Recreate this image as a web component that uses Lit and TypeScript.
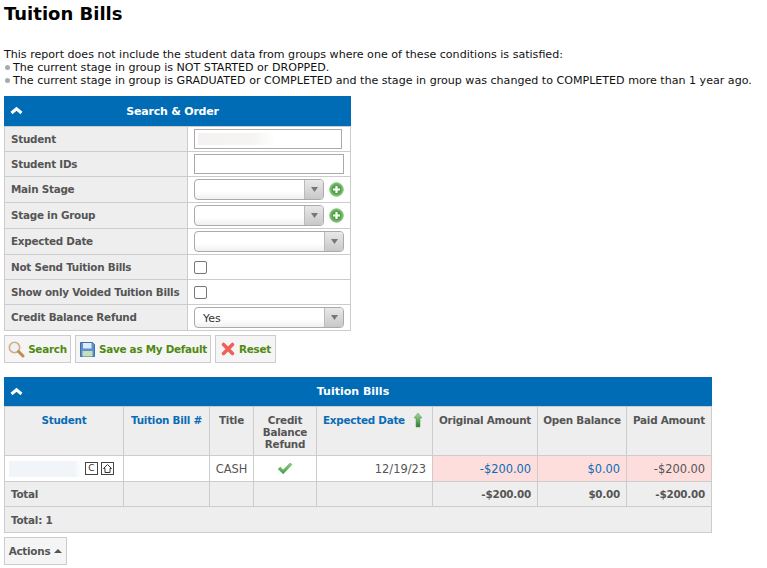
import { LitElement, html, css } from "lit";
import { customElement } from "lit/decorators.js";

const chevron = html`<svg class="chev" width="13" height="9" viewBox="0 0 13 9"><path d="M1.500 7 6.500 2.800l5 4.200" fill="none" stroke="#fff" stroke-width="3" stroke-linejoin="miter"/></svg>`;
const plus = html`<svg class="plus" width="15" height="15" viewBox="0 0 15 15"><circle cx="7.500" cy="7.500" r="6.800" fill="#6fb864" stroke="#8cc583"/><circle cx="7.500" cy="7.500" r="4.800" fill="#4f9f45"/><path d="M7.500 4v7M4 7.500h7" stroke="#fff" stroke-width="2.200"/></svg>`;
const arrowBox = html`<span class="arrow-box"><svg width="7" height="5" viewBox="0 0 7 5"><path d="M0 0h7L3.500 5z" fill="#777"/></svg></span>`;

@customElement("app-root")
export class AppRoot extends LitElement {
  static styles = css`
    :host { display: block; font: 12px "DejaVu Sans", Verdana, sans-serif; color: #111; width: 767px; height: 568px; overflow: hidden; box-sizing: border-box; padding: 0 4px; }
    h1 { margin: 0; padding-top: 3px; height: 48px; box-sizing: border-box; font-size: 18px; line-height: 21px; font-weight: bold; color: #000; }
    .note { font-size: 11.08px; line-height: 13px; color: #111; height: 48px; white-space: nowrap; }
    .dot { display: inline-block; width: 5px; height: 5px; border-radius: 50%; background: #aaa; margin: 0 3px 1px 1px; }
    .bar { background: #006cb5; color: #fff; font-weight: bold; font-size: 11px; text-align: center; display: flex; align-items: center; justify-content: center; position: relative; box-sizing: border-box; padding-right: 10px; }
    .chev { position: absolute; left: 6px; top: 50%; margin-top: -5px; }
    .search { width: 347px; }
    .search .bar { height: 30px; letter-spacing: -.2px; }
    table { border-collapse: collapse; table-layout: fixed; }
    .search table { width: 346px; }
    th, td { border: 1px solid #ccc; box-sizing: border-box; padding: 0; }
    .search th { background: #eee; color: #555; font-size: 10.4px; letter-spacing: -.25px; font-weight: bold; text-align: left; padding-left: 6px; white-space: nowrap; overflow: hidden; }
    .search tr.tall th { padding-bottom: 2px; }
    .search td { padding-left: 6px; white-space: nowrap; }
    .ctl { display: flex; align-items: center; gap: 5px; }
    .input { box-sizing: border-box; height: 20px; border: 1px solid #aaa; background: #fff; position: relative; }
    .blur1 { position: absolute; left: 3px; top: 3px; width: 78px; height: 12px; background: linear-gradient(90deg,#f3f2f0,#f5f4f2 70%,#fff); }
    .select { box-sizing: border-box; height: 21px; border: 1px solid #aaa; border-radius: 4px; background: linear-gradient(#fff 60%, #f0f0f0); display: flex; align-items: center; overflow: hidden; font-size: 11px; color: #333; }
    .select .val { flex: 1; padding-left: 8px; padding-top: 2px; }
    .arrow-box { width: 19px; height: 100%; border-left: 1px solid #bbb; background: linear-gradient(#e8e8e8,#c8c8c8); display: flex; align-items: center; justify-content: center; box-sizing: border-box; }
    .check { display: block; box-sizing: border-box; width: 13px; height: 13px; border: 1px solid #777; border-radius: 2px; background: #fff; }
    .buttons { display: flex; gap: 4px; margin-top: 4px; height: 28px; margin-bottom: 14px; }
    .btn { box-sizing: border-box; height: 28px; border: 1px solid #ccc; background: #f5f5f5; display: flex; align-items: center; color: #4f8a10; font-size: 10.4px; letter-spacing: -.25px; font-weight: bold; white-space: nowrap; justify-content: center; gap: 3px; }
    .bills { width: 708px; }
    .bills .bar { height: 29px; }
    .bills table { width: 707px; }
    .bills th { background: #eee; color: #555; font-size: 10.4px; letter-spacing: -.25px; font-weight: bold; vertical-align: top; padding: 7px 0 0; line-height: 12px; text-align: center; white-space: nowrap; }
    .bills th.link { color: #0a6cb5; }
    .bills th.exp { text-align: left; padding-left: 6px; }
    .bills td { font-size: 11.4px; color: #555; text-align: right; padding: 0 6px; }
    .bills td.c { text-align: center; padding: 0; }
    .bills td.pink { background: #fedddd; }
    .bills td.link { color: #0a6cb5; }
    .bills .tot td { background: #eee; font-weight: bold; font-size: 10.4px; letter-spacing: -.25px; }
    .bills .tot td.l { text-align: left; }
    .stu { display: flex; align-items: center; gap: 3px; padding-left: 4px; }
    .blur2 { width: 73px; height: 16px; background: linear-gradient(90deg,#f1f5fa,#f1f5fa 90%,#fff); }
    .ibox { box-sizing: border-box; width: 13px; height: 13px; border: 1px solid #444; display: flex; align-items: center; justify-content: center; font-size: 9px; color: #333; line-height: 1; font-weight: normal; }
    .sort { display: inline-block; vertical-align: top; margin: -2px 0 -4px 8px; }
    .actions { box-sizing: border-box; margin-top: 4px; width: 63px; height: 28px; border: 1px solid #ccc; background: #f5f5f5; color: #555; font-weight: bold; font-size: 10.4px; letter-spacing: -.25px; display: flex; align-items: center; justify-content: center; gap: 4px; }
  `;

  private row(label: string, h: number, body: unknown) {
    return html`<tr class=${h === 26 ? "tall" : ""} style="height:${h}px"><th>${label}</th><td>${body}</td></tr>`;
  }

  render() {
    return html`
      <h1>Tuition Bills</h1>
      <div class="note">This report does not include the student data from groups where one of these conditions is satisfied:<br/>
        <span class="dot"></span>The current stage in group is NOT STARTED or DROPPED.<br/>
        <span class="dot"></span>The current stage in group is GRADUATED or COMPLETED and the stage in group was changed to COMPLETED more than 1 year ago.</div>
      <div class="search">
        <div class="bar">${chevron}Search &amp; Order</div>
        <table>
          <colgroup><col style="width:183px"/><col style="width:163px"/></colgroup>
          ${this.row("Student", 25, html`<div class="input" style="width:148px"><span class="blur1"></span></div>`)}
          ${this.row("Student IDs", 25, html`<div class="input" style="width:150px"></div>`)}
          ${this.row("Main Stage", 26, html`<div class="ctl"><div class="select" style="width:130px"><span class="val"></span>${arrowBox}</div>${plus}</div>`)}
          ${this.row("Stage in Group", 26, html`<div class="ctl"><div class="select" style="width:130px"><span class="val"></span>${arrowBox}</div>${plus}</div>`)}
          ${this.row("Expected Date", 26, html`<div class="select" style="width:150px"><span class="val"></span>${arrowBox}</div>`)}
          ${this.row("Not Send Tuition Bills", 25, html`<span class="check"></span>`)}
          ${this.row("Show only Voided Tuition Bills", 25, html`<span class="check"></span>`)}
          ${this.row("Credit Balance Refund", 26, html`<div class="select" style="width:150px"><span class="val">Yes</span>${arrowBox}</div>`)}
        </table>
      </div>
      <div class="buttons">
        <div class="btn" style="width:67px">
          <svg width="17" height="17" viewBox="0 0 17 17"><circle cx="6.500" cy="6.500" r="5.200" fill="#eaf2f8" stroke="#d3ad80" stroke-width="1.600"/><path d="M10.500 10.500 15 15" stroke="#c08a50" stroke-width="3" stroke-linecap="round"/></svg>Search</div>
        <div class="btn" style="width:136px">
          <svg width="17" height="17" viewBox="0 0 17 17"><path d="M1.500 1.500h12l2 2v12h-14z" fill="#5b8fd0" stroke="#3f6eaa"/><rect x="4" y="2" width="8.500" height="5.500" fill="#dfeaf7"/><rect x="3.500" y="10" width="10" height="5.500" fill="#c4e0b8"/></svg>Save as My Default</div>
        <div class="btn" style="width:61px">
          <svg width="16" height="16" viewBox="0 0 16 16"><path d="M3.500 3.500l9 9M12.500 3.500l-9 9" stroke="#f0605a" stroke-width="3.600" stroke-linecap="round"/></svg>Reset</div>
      </div>
      <div class="bills">
        <div class="bar">${chevron}Tuition Bills</div>
        <table>
          <colgroup>
            <col style="width:119px"/><col style="width:86px"/><col style="width:44px"/><col style="width:63px"/><col style="width:116px"/><col style="width:105px"/><col style="width:89px"/><col style="width:85px"/>
          </colgroup>
          <tr style="height:49px">
            <th class="link">Student</th><th class="link">Tuition Bill #</th><th>Title</th><th>Credit<br/>Balance<br/>Refund</th>
            <th class="link exp">Expected Date<svg class="sort" width="10" height="16" viewBox="0 0 10 16"><defs><linearGradient id="ag" x1="0" y1="0" x2="0" y2="1"><stop offset="0" stop-color="#a8dca0"/><stop offset="1" stop-color="#2f7a30"/></linearGradient></defs><path d="M5 1l4 5H7v9H3V6H1z" fill="url(#ag)" stroke="#4f9a4f" stroke-width=".5"/></svg></th>
            <th>Original Amount</th><th>Open Balance</th><th>Paid Amount</th>
          </tr>
          <tr style="height:26px">
            <td class="c"><div class="stu"><span class="blur2"></span><span class="ibox">C</span><span class="ibox"><svg width="9" height="9" viewBox="0 0 9 9"><path d="M4.500.5 8.500 4.500H7V8.500H2V4.500H.5z" fill="none" stroke="#333"/></svg></span></div></td>
            <td></td><td class="c">CASH</td>
            <td class="c"><svg width="16" height="13" viewBox="0 0 16 13" style="display:block;margin:auto"><defs><linearGradient id="cg" x1="0" y1="0" x2="0" y2="1"><stop offset="0" stop-color="#8ad080"/><stop offset="1" stop-color="#4a9c48"/></linearGradient></defs><path d="M1 7l2.500-2 2.500 3L13 1l2 1.500-8.800 9.500z" fill="url(#cg)" stroke="#5fa85a" stroke-width=".5"/></svg></td>
            <td>12/19/23</td>
            <td class="pink link">-$200.00</td><td class="pink link">$0.00</td><td class="pink">-$200.00</td>
          </tr>
          <tr class="tot" style="height:25px"><td class="l">Total</td><td></td><td></td><td></td><td></td><td>-$200.00</td><td>$0.00</td><td>-$200.00</td></tr>
          <tr class="tot" style="height:26px"><td class="l" colspan="8">Total: 1</td></tr>
        </table>
      </div>
      <div class="actions">Actions <svg width="8" height="4" viewBox="0 0 8 4"><path d="M0 4h8L4 0z" fill="#555"/></svg></div>
    `;
  }
}
